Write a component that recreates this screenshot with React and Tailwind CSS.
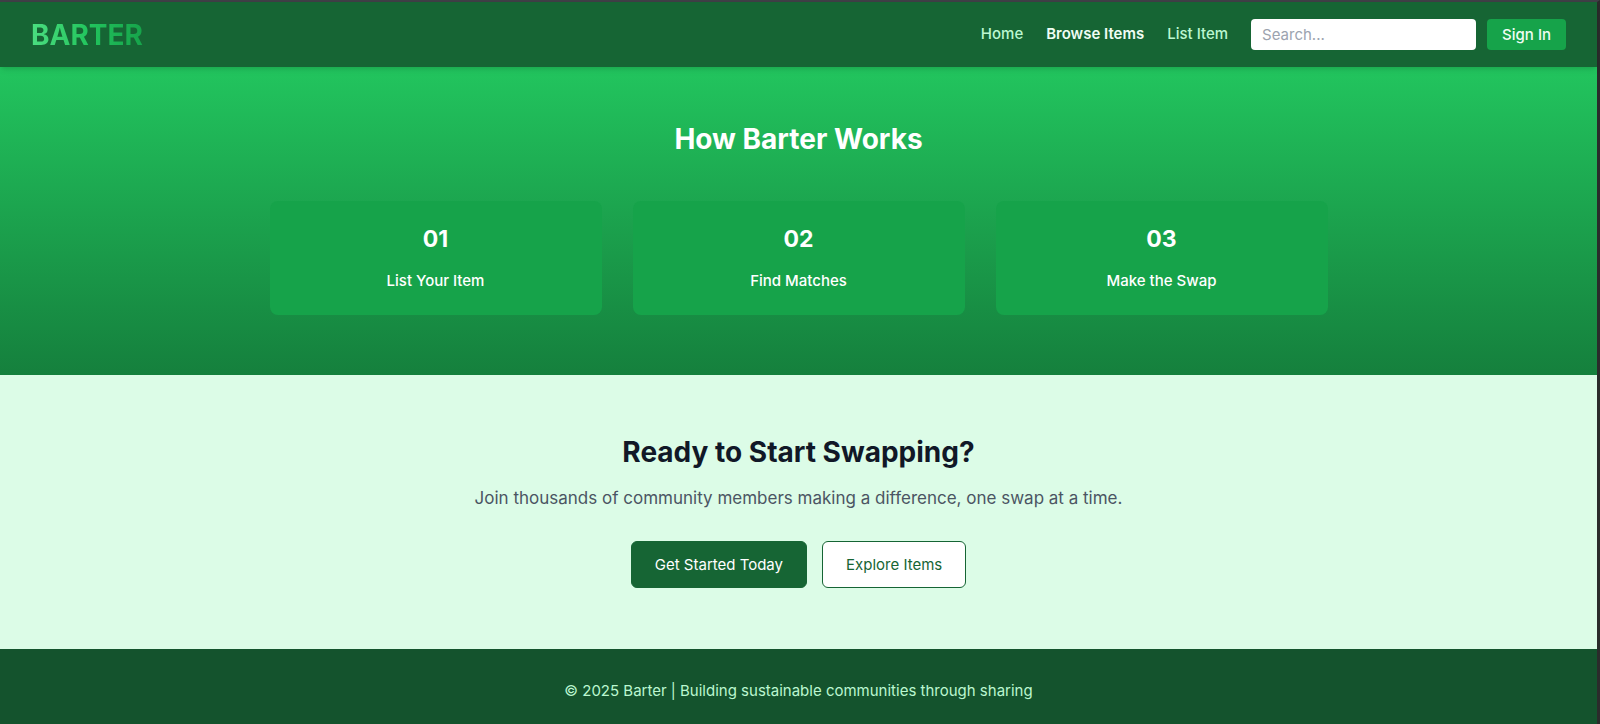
const navLinks = [
  { label: "Home", style: "font-medium text-[#bbf7d0]" },
  { label: "Browse Items", style: "font-semibold text-[#f0fdf4]" },
  { label: "List Item", style: "font-medium text-[#bbf7d0]" },
];

const steps = [
  { number: "01", title: "List Your Item" },
  { number: "02", title: "Find Matches" },
  { number: "03", title: "Make the Swap" },
];

function Header() {
  return (
    <header className="relative flex h-[65px] items-center justify-between bg-[#166534] px-[31px] shadow-md">
      <a
        href="#"
        className="bg-gradient-to-r from-[#4ade80] via-[#22c55e] to-[#16a34a] bg-clip-text text-[28px] leading-9 font-bold text-transparent"
      >
        BARTER
      </a>
      <div className="flex items-center">
        <nav className="mr-[23px] flex gap-[23px] pb-0.5 text-[15px] leading-6">
          {navLinks.map((link) => (
            <a key={link.label} href="#" className={link.style}>
              {link.label}
            </a>
          ))}
        </nav>
        <form className="flex gap-[11px]">
          <input
            type="search"
            aria-label="Search"
            placeholder="Search..."
            className="h-[31px] w-[225px] rounded-[4px] bg-white px-[11px] text-[15px] text-gray-800 placeholder:text-[#9ca3af]"
          />
          <button
            type="button"
            className="h-[31px] rounded-[4px] bg-[#16a34a] px-[15px] pt-0.5 text-[15px] font-medium text-[#f0fdf4]"
          >
            Sign In
          </button>
        </form>
      </div>
    </header>
  );
}

function HowItWorks() {
  return (
    <section className="bg-gradient-to-b from-[#22c55e] to-[#15803d] px-[31px] pt-[54px] pb-[60px] text-center text-white">
      <h2 className="mb-[44px] text-[28px] leading-9 font-bold">How Barter Works</h2>
      <div className="mx-auto grid max-w-[1058px] grid-cols-3 gap-[31px]">
        {steps.map((step) => (
          <div key={step.number} className="rounded-[8px] bg-[#16a34a] p-[23px]">
            <div className="mb-[15px] text-[23px] leading-[30px] font-bold">{step.number}</div>
            <h3 className="text-[15px] leading-[23px] font-medium">{step.title}</h3>
          </div>
        ))}
      </div>
    </section>
  );
}

function CallToAction() {
  return (
    <section className="bg-[#dcfce7] px-[31px] pt-[59px] pb-[61px] text-center">
      <h2 className="mb-[15px] text-[28px] leading-9 font-bold text-[#111827]">
        Ready to Start Swapping?
      </h2>
      <p className="mb-[29px] text-[17px] leading-[27px] text-[#4b5563]">
        Join thousands of community members making a difference, one swap at a time.
      </p>
      <div className="flex justify-center gap-[15px] text-[15px] leading-[23px]">
        <button
          type="button"
          className="rounded-[6px] border border-[#166534] bg-[#166534] px-[23px] py-[11px] text-white"
        >
          Get Started Today
        </button>
        <button
          type="button"
          className="rounded-[6px] border border-[#166534] bg-white px-[23px] py-[11px] text-[#166534]"
        >
          Explore Items
        </button>
      </div>
    </section>
  );
}

export default function App() {
  return (
    <div className="flex min-h-screen flex-col border-t-2 border-r-3 border-t-[#3f3f46] border-r-[#2b2b2b] bg-[#14532d] font-['Inter',sans-serif]">
      <Header />
      <main>
        <HowItWorks />
        <CallToAction />
      </main>
      <footer className="px-[31px] pt-[30px] pb-[21px] text-center text-[15px] leading-[23px] text-[#bbf7d0]">
        © 2025 Barter | Building sustainable communities through sharing
      </footer>
    </div>
  );
}
